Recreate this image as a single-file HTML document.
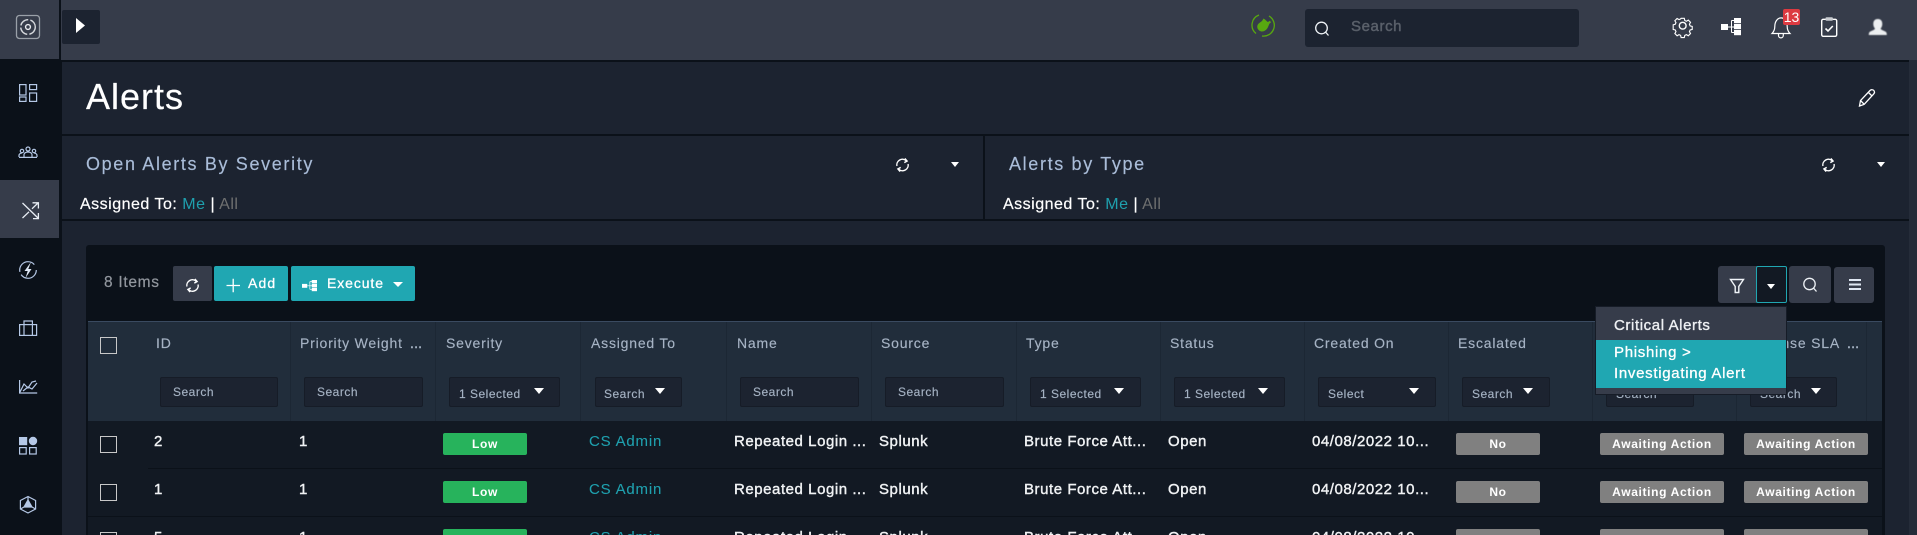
<!DOCTYPE html>
<html><head><meta charset="utf-8"><title>Alerts</title>
<style>
html,body{margin:0;padding:0;width:1917px;height:535px;overflow:hidden;background:#0b1119}
body{position:relative;font-family:"Liberation Sans",sans-serif;color:#fff}
.b,.t{position:absolute}
.t{white-space:nowrap}
.wt{font-size:18px;line-height:24px;letter-spacing:1.65px;color:#a9bcd8;top:152px;-webkit-text-stroke:.15px #a9bcd8}
.as{font-size:16px;line-height:20px;top:195px;letter-spacing:.5px;-webkit-text-stroke:.2px #fff}
.as i{font-style:normal;color:#1fa0ae;-webkit-text-stroke:0}.as u{text-decoration:none;color:#6f7070;-webkit-text-stroke:0}
.h{font-size:14px;line-height:18px;top:334px;letter-spacing:.8px;color:#a6b3c4;-webkit-text-stroke:.15px #a6b3c4}
.f{position:absolute;top:377px;height:28px;background:#1c2330;border:1px solid #161c27;border-radius:2px}
.s{position:absolute;font-size:12px;line-height:16px;letter-spacing:.5px;color:#a6b3c4;white-space:nowrap;-webkit-text-stroke:.15px #a6b3c4}
.c{position:absolute;width:0;height:0;border-left:5.5px solid transparent;border-right:5.5px solid transparent;border-top:6px solid #fff}
.cb{position:absolute;left:100px;width:15px;height:15px;border:1px solid #c8c8c8}
.r{font-size:15px;line-height:20px;letter-spacing:.55px;color:#f0f2f4;-webkit-text-stroke:.4px #f0f2f4}
.bd{position:absolute;height:22px;line-height:22px;border-radius:2px;text-align:center;font-size:12px;font-weight:bold;letter-spacing:.65px;color:#fff}
.g{background:#27b35c}.y{background:#808080}
</style></head><body>
<!-- frame -->
<div class="b" style="left:0;top:0;width:59px;height:59px;background:#363c4a"></div>
<div class="b" style="left:61px;top:0;width:1856px;height:60px;background:#363c4a"></div>
<div class="b" style="left:0;top:180px;width:59px;height:58px;background:#363c4a"></div>
<div class="b" style="left:62px;top:62px;width:1847px;height:72px;background:#1c2330"></div>
<div class="b" style="left:62px;top:136px;width:921px;height:83px;background:#1c2330"></div>
<div class="b" style="left:985px;top:136px;width:924px;height:83px;background:#1c2330"></div>
<div class="b" style="left:62px;top:221px;width:1847px;height:314px;background:#1c2330"></div>
<div class="b" style="left:1909px;top:60px;width:8px;height:475px;background:#252c39"></div>
<!-- toggle -->
<div class="b" style="left:62px;top:10px;width:38px;height:34px;background:#1c2330;border-radius:2px"></div>
<!-- search -->
<div class="b" style="left:1305px;top:9px;width:274px;height:38px;background:#1c2330;border-radius:3px"></div>
<div class="t" style="left:1351px;top:17px;font-size:15px;line-height:20px;letter-spacing:.6px;color:#5a606a;-webkit-text-stroke:.45px #5a606a">Search</div>
<!-- title -->
<div class="t" style="left:86px;top:76px;font-size:36px;line-height:42px;letter-spacing:1px;-webkit-text-stroke:.2px #fff">Alerts</div>
<!-- widgets -->
<div class="t wt" style="left:86px">Open Alerts By Severity</div>
<div class="t as" style="left:80px">Assigned To: <i>Me</i> | <u>All</u></div>
<div class="t wt" style="left:1009px">Alerts by Type</div>
<div class="t as" style="left:1003px">Assigned To: <i>Me</i> | <u>All</u></div>
<div class="c" style="left:951px;top:162px;border-left-width:4.5px;border-right-width:4.5px;border-top-width:5px"></div>
<div class="c" style="left:1877px;top:162px;border-left-width:4.5px;border-right-width:4.5px;border-top-width:5px"></div>
<!-- card -->
<div class="b" style="left:86px;top:245px;width:1799px;height:290px;background:#0b1119;border-radius:3px 3px 0 0"></div>
<div class="t" style="left:104px;top:274px;font-size:15.5px;line-height:18px;letter-spacing:.7px;color:#92979e;-webkit-text-stroke:.2px #92979e">8 Items</div>
<div class="b" style="left:173px;top:266px;width:39px;height:35px;background:#363c4a;border-radius:2px"></div>
<div class="b" style="left:214px;top:266px;width:74px;height:35px;background:#20a7b2;border-radius:2px"></div>
<div class="b" style="left:291px;top:266px;width:124px;height:35px;background:#20a7b2;border-radius:2px"></div>
<div class="t" style="left:248px;top:274px;font-size:14px;line-height:18px;letter-spacing:1.1px;-webkit-text-stroke:.3px #fff">Add</div>
<div class="t" style="left:327px;top:274px;font-size:14px;line-height:18px;letter-spacing:.9px;-webkit-text-stroke:.3px #fff">Execute</div>
<div class="c" style="left:393px;top:282px;border-left-width:5px;border-right-width:5px;border-top-width:5px"></div>
<!-- right toolbar -->
<div class="b" style="left:1718px;top:266px;width:69px;height:37px;background:#363c4a;border-radius:3px"></div>
<div class="b" style="left:1756px;top:266px;width:29px;height:35px;background:#121923;border:1px solid #20a7b2;border-radius:2px"></div>
<div class="c" style="left:1767px;top:284px;border-left-width:4.5px;border-right-width:4.5px;border-top-width:5px"></div>
<div class="b" style="left:1789px;top:266px;width:42px;height:37px;background:#363c4a;border-radius:3px"></div>
<div class="b" style="left:1834px;top:267px;width:40px;height:36px;background:#363c4a;border-radius:3px"></div>
<!-- table header -->
<div class="b" style="left:88px;top:321px;width:1794px;height:100px;background:#212d3b;border-top:1px solid #3a4a60;box-sizing:border-box"></div>
<div class="b" style="left:290px;top:322px;width:1px;height:99px;background:#1c2734"></div>
<div class="b" style="left:435px;top:322px;width:1px;height:99px;background:#1c2734"></div>
<div class="b" style="left:580px;top:322px;width:1px;height:99px;background:#1c2734"></div>
<div class="b" style="left:726px;top:322px;width:1px;height:99px;background:#1c2734"></div>
<div class="b" style="left:871px;top:322px;width:1px;height:99px;background:#1c2734"></div>
<div class="b" style="left:1016px;top:322px;width:1px;height:99px;background:#1c2734"></div>
<div class="b" style="left:1160px;top:322px;width:1px;height:99px;background:#1c2734"></div>
<div class="b" style="left:1304px;top:322px;width:1px;height:99px;background:#1c2734"></div>
<div class="b" style="left:1448px;top:322px;width:1px;height:99px;background:#1c2734"></div>
<div class="b" style="left:1592px;top:322px;width:1px;height:99px;background:#1c2734"></div>
<div class="b" style="left:1736px;top:322px;width:1px;height:99px;background:#1c2734"></div>
<div class="b" style="left:1866px;top:322px;width:1px;height:99px;background:#1c2734"></div>
<div class="cb" style="top:337px"></div>
<div class="t h" style="left:156px">ID</div>
<div class="t h" style="left:300px">Priority Weight</div>
<div class="t h" style="left:410px;letter-spacing:.2px;-webkit-text-stroke:.4px #a6b3c4">...</div>
<div class="t h" style="left:446px">Severity</div>
<div class="t h" style="left:591px">Assigned To</div>
<div class="t h" style="left:737px">Name</div>
<div class="t h" style="left:881px">Source</div>
<div class="t h" style="left:1026px">Type</div>
<div class="t h" style="left:1170px">Status</div>
<div class="t h" style="left:1314px">Created On</div>
<div class="t h" style="left:1458px">Escalated</div>
<div class="t h" style="left:1737px">Response SLA</div>
<div class="t h" style="left:1847px;letter-spacing:.2px;-webkit-text-stroke:.4px #a6b3c4">...</div>
<!-- filters -->
<div class="f" style="left:160px;width:116px"></div><div class="s" style="left:173px;top:384px">Search</div>
<div class="f" style="left:304px;width:117px"></div><div class="s" style="left:317px;top:384px">Search</div>
<div class="f" style="left:449px;width:109px"></div><div class="s" style="left:459px;top:386px">1 Selected</div><div class="c" style="left:534px;top:388px"></div>
<div class="f" style="left:595px;width:85px"></div><div class="s" style="left:604px;top:386px">Search</div><div class="c" style="left:655px;top:388px"></div>
<div class="f" style="left:740px;width:117px"></div><div class="s" style="left:753px;top:384px">Search</div>
<div class="f" style="left:885px;width:117px"></div><div class="s" style="left:898px;top:384px">Search</div>
<div class="f" style="left:1030px;width:109px"></div><div class="s" style="left:1040px;top:386px">1 Selected</div><div class="c" style="left:1114px;top:388px"></div>
<div class="f" style="left:1174px;width:109px"></div><div class="s" style="left:1184px;top:386px">1 Selected</div><div class="c" style="left:1258px;top:388px"></div>
<div class="f" style="left:1318px;width:116px"></div><div class="s" style="left:1328px;top:386px">Select</div><div class="c" style="left:1409px;top:388px"></div>
<div class="f" style="left:1462px;width:86px"></div><div class="s" style="left:1472px;top:386px">Search</div><div class="c" style="left:1523px;top:388px"></div>
<div class="f" style="left:1606px;width:86px"></div><div class="s" style="left:1616px;top:386px">Search</div><div class="c" style="left:1667px;top:388px"></div>
<div class="f" style="left:1750px;width:85px"></div><div class="s" style="left:1760px;top:386px">Search</div><div class="c" style="left:1811px;top:388px"></div>
<!-- rows -->
<div class="b" style="left:88px;top:421px;width:1794px;height:114px;background:#121923"></div>
<div class="b" style="left:148px;top:468px;width:1734px;height:1px;background:#0b1119"></div>
<div class="b" style="left:88px;top:516px;width:1794px;height:1px;background:#0b1119"></div>
<div class="cb" style="top:436px"></div><div class="cb" style="top:484px"></div><div class="cb" style="top:532px"></div>

<div class="t r" style="left:154px;top:432px">2</div>
<div class="t r" style="left:299px;top:432px">1</div>
<div class="bd g" style="left:443px;top:433px;width:84px">Low</div>
<div class="t r" style="left:589px;top:432px;color:#1fa0ae;-webkit-text-stroke:.1px #1fa0ae;letter-spacing:.8px">CS Admin</div>
<div class="t r" style="left:734px;top:432px">Repeated Login ...</div>
<div class="t r" style="left:879px;top:432px">Splunk</div>
<div class="t r" style="left:1024px;top:432px">Brute Force Att...</div>
<div class="t r" style="left:1168px;top:432px">Open</div>
<div class="t r" style="left:1312px;top:432px">04/08/2022 10...</div>
<div class="bd y" style="left:1456px;top:433px;width:84px">No</div>
<div class="bd y" style="left:1600px;top:433px;width:124px">Awaiting Action</div>
<div class="bd y" style="left:1744px;top:433px;width:124px">Awaiting Action</div>

<div class="t r" style="left:154px;top:480px">1</div>
<div class="t r" style="left:299px;top:480px">1</div>
<div class="bd g" style="left:443px;top:481px;width:84px">Low</div>
<div class="t r" style="left:589px;top:480px;color:#1fa0ae;-webkit-text-stroke:.1px #1fa0ae;letter-spacing:.8px">CS Admin</div>
<div class="t r" style="left:734px;top:480px">Repeated Login ...</div>
<div class="t r" style="left:879px;top:480px">Splunk</div>
<div class="t r" style="left:1024px;top:480px">Brute Force Att...</div>
<div class="t r" style="left:1168px;top:480px">Open</div>
<div class="t r" style="left:1312px;top:480px">04/08/2022 10...</div>
<div class="bd y" style="left:1456px;top:481px;width:84px">No</div>
<div class="bd y" style="left:1600px;top:481px;width:124px">Awaiting Action</div>
<div class="bd y" style="left:1744px;top:481px;width:124px">Awaiting Action</div>

<div class="t r" style="left:154px;top:528px">5</div>
<div class="t r" style="left:299px;top:528px">1</div>
<div class="bd g" style="left:443px;top:529px;width:84px">Low</div>
<div class="t r" style="left:589px;top:528px;color:#1fa0ae;-webkit-text-stroke:.1px #1fa0ae;letter-spacing:.8px">CS Admin</div>
<div class="t r" style="left:734px;top:528px">Repeated Login ...</div>
<div class="t r" style="left:879px;top:528px">Splunk</div>
<div class="t r" style="left:1024px;top:528px">Brute Force Att...</div>
<div class="t r" style="left:1168px;top:528px">Open</div>
<div class="t r" style="left:1312px;top:528px">04/08/2022 10...</div>
<div class="bd y" style="left:1456px;top:529px;width:84px">No</div>
<div class="bd y" style="left:1600px;top:529px;width:124px">Awaiting Action</div>
<div class="bd y" style="left:1744px;top:529px;width:124px">Awaiting Action</div>

<!-- icons -->
<svg class="b" style="left:0;top:0" width="1917" height="535" viewBox="0 0 1917 535" fill="none">
<defs>
<g id="rf" stroke="#fff" stroke-width="1.4" fill="none"><path d="M-5.6 1A5.7 5.7 0 0 1 3.8-4.3"/><path d="M5.6-1A5.7 5.7 0 0 1-3.8 4.3"/><path d="M2.4-6.6 4.6-4 1.8-2.4M-2.4 6.6-4.6 4-1.8 2.4"/></g>
<g id="hr"><rect x="0" y="6" width="7" height="6" fill="#fff"/><path d="M7 9h3.5M10.5 2.5v12M10.5 2.5h3M10.5 9h3M10.5 14.5h3" stroke="#fff" stroke-width="1"/><rect x="13" y="0" width="7" height="5.2" fill="#fff"/><rect x="13" y="6" width="7" height="5.2" fill="#fff"/><rect x="13" y="12" width="7" height="5.2" fill="#fff"/></g>
</defs>
<!-- logo -->
<rect x="16.5" y="15.5" width="23" height="23" rx="3" stroke="#9aa0a8" stroke-width="1.3"/>
<circle cx="28" cy="27" r="7.3" stroke="#d5d8dc" stroke-width="1.4" stroke-dasharray="10 2.2"/>
<circle cx="28" cy="27" r="2.4" stroke="#e8eaee" stroke-width="1.4"/>
<!-- toggle caret -->
<path d="M76 18 85 25.5 76 33Z" fill="#fff"/>
<!-- sidebar -->
<g stroke="#b5c8e6" stroke-width="1.2">
<rect x="19.6" y="84.6" width="6.4" height="10.4"/><rect x="29.6" y="84.6" width="7" height="5"/><rect x="19.6" y="97" width="6.4" height="4.4"/><rect x="29.6" y="93" width="7" height="8.4"/>
<circle cx="28" cy="149" r="2"/><circle cx="22" cy="151" r="1.7"/><circle cx="34" cy="151" r="1.7"/>
<path d="M19 157v-1.5c0-1.5 1.5-2.5 3-2.5M37 157v-1.5c0-1.5-1.5-2.5-3-2.5M24 157v-2.5c0-1.5 2-2.5 4-2.5s4 1 4 2.5V157M19 157.4h18"/>
<circle cx="28" cy="270" r="8.3" stroke-dasharray="21 3 22 6"/>
<path d="M31 262 24.5 271h3.2l-2.2 7 6-9h-3.2z" fill="#dfe8f5" stroke="none"/>
<rect x="19.6" y="324.6" width="17" height="10.8"/><path d="M24 324.6V321h8.4v3.6M24 324.6v10.8M32.4 324.6v10.8"/>
<path d="M19.6 380v13h17.6M20 392 24 384l4 4 4-6 4-1M23 391l5-4 4 2 5-6"/>
<rect x="19.6" y="437.6" width="7" height="7" fill="#b5c8e6"/><circle cx="33" cy="441" r="3.6" fill="#b5c8e6"/><rect x="19.6" y="447.6" width="6.6" height="6.4"/><rect x="29.6" y="447.6" width="6.6" height="6.4"/>
<path d="M28 496.5 35.6 500.5V509L28 513 20.4 509V500.5Z"/><path d="M28 500l4 7h-8z" fill="#b5c8e6"/><path d="M24 507 20.4 509M32 507 35.6 509M28 500v-3.5"/>
</g>
<path d="M22.5 203 38 218M22.5 218 29 211.8M32 208.8 38 203M32.5 202.8H38.4V208.5M38.4 213V218.6H33" stroke="#e8edf4" stroke-width="1.3"/>
<!-- plug -->
<path d="M1259 15A10.8 10.8 0 0 0 1256 33.5M1262 36A10.8 10.8 0 0 0 1269 16" stroke="#58a80f" stroke-width="1.3"/>
<path d="M1266 20.5 1269.5 23.5 1267.8 27.5C1266 31 1262.2 32.6 1259.3 30.6 1256.6 28.5 1256.6 25 1259 23.2L1262 21 1263.5 18.5 1265.2 19.6ZM1267 22.5 1270 20.8 1271 22.4 1268.5 24.5Z" fill="#58a80f"/>
<!-- search -->
<circle cx="1321.5" cy="28" r="5.8" stroke="#eef2f6" stroke-width="1.3"/><path d="M1325.5 32 1328.5 35.5" stroke="#eef2f6" stroke-width="1.3"/>
<!-- gear -->
<g transform="translate(1682.7 25.7)" stroke="#fff" stroke-width="1.4"><circle r="3.4"/><path d="M-2-9.2h4l.6 2.7 2 .9 2.4-1.4 2.8 2.8-1.4 2.4.9 2 2.6.7v3.8l-2.6.7-.9 2 1.4 2.4-2.8 2.8-2.4-1.4-2 .9-.6 2.7h-4l-.6-2.7-2-.9-2.4 1.4-2.8-2.8 1.4-2.4-.9-2-2.6-.7V-1.1l2.6-.7.9-2-1.4-2.4 2.8-2.8 2.4 1.4 2-.9z" transform="scale(.8)"/></g>
<use href="#hr" x="1721" y="18"/>
<!-- bell -->
<path d="M1772 33.5c2-2 2.8-3.6 2.8-7 0-4.6 2.4-8.6 6.2-8.6s6.2 4 6.2 8.6c0 3.4.8 5 2.8 7zM1778.5 33.5v2a2.3 2.3 0 0 0 4.8 0v-2" stroke="#fff" stroke-width="1.2"/>
<!-- clipboard -->
<rect x="1821.7" y="19.3" width="15" height="17" rx="1.5" stroke="#fff" stroke-width="1.4"/><rect x="1825.5" y="17.3" width="7.4" height="3.4" rx="1" fill="#c9ccd1"/><path d="M1825.5 28.5 1828 31 1832.8 26" stroke="#fff" stroke-width="1.6"/>
<!-- user -->
<path d="M1878 19c3 0 4.3 2.2 4.3 5 0 2-.7 3.4-1.7 4.6.5 1.6 3.8 2 5.4 3.4.6.6.8 1.6.8 3h-18c0-1.4.2-2.4.8-3 1.6-1.4 4.9-1.8 5.4-3.4-1-1.2-1.7-2.6-1.7-4.6 0-2.8 1.3-5 4.4-5z" fill="#eceef0" style="filter:blur(.4px)"/>
<!-- pencil -->
<path d="M1859.5 106 1860.5 100.5 1870 90.5C1871.3 89.3 1873 89.6 1873.8 90.5 1874.7 91.5 1874.6 93 1873.5 94.2L1864.2 104.3ZM1860.5 100.5 1864.2 104.3M1868.5 92.5 1872 96" stroke="#fff" stroke-width="1.3"/>
<!-- refreshes -->
<use href="#rf" x="902.5" y="165"/>
<use href="#rf" x="1828.5" y="165"/>
<use href="#rf" x="192.5" y="285.5"/>
<!-- add -->
<path d="M226.5 285.5H240M233.2 278.7V292.3" stroke="#fff" stroke-width="1.3"/>
<use href="#hr" transform="translate(302 280) scale(.75 .65)"/>
<!-- filter -->
<path d="M1730.5 279.5H1743.5L1738.8 286.5V292.5H1735.2V286.5Z" stroke="#f0f4f8" stroke-width="1.4"/>
<!-- zoom search -->
<circle cx="1809.5" cy="284" r="5.7" stroke="#eef2f6" stroke-width="1.3"/><path d="M1813.5 288 1816.5 291.5" stroke="#eef2f6" stroke-width="1.3"/>
<!-- menu -->
<path d="M1849 280h12M1849 284.5h12M1849 289h12" stroke="#dfe7f2" stroke-width="2"/>
</svg>
<div class="b" style="left:1783px;top:9px;width:17px;height:16px;background:#dc3a41;border-radius:2px;font-size:14px;line-height:16px;text-align:center;color:#fff">13</div>
<!-- dropdown -->
<div class="b" style="left:1595px;top:306px;width:190px;height:87px;background:#363c4a;border:1px solid #161c27"></div>
<div class="b" style="left:1596px;top:340px;width:190px;height:48px;background:#20a7b2"></div>
<div class="t" style="left:1614px;top:316px;font-size:15px;line-height:20px;letter-spacing:.6px;color:#eef0f3;-webkit-text-stroke:.35px #eef0f3">Critical Alerts</div>
<div class="t" style="left:1614px;top:343px;font-size:15px;line-height:20px;letter-spacing:.7px;-webkit-text-stroke:.3px #fff">Phishing &gt;</div>
<div class="t" style="left:1614px;top:364px;font-size:15px;line-height:20px;letter-spacing:.7px;-webkit-text-stroke:.3px #fff">Investigating Alert</div>
</body></html>
